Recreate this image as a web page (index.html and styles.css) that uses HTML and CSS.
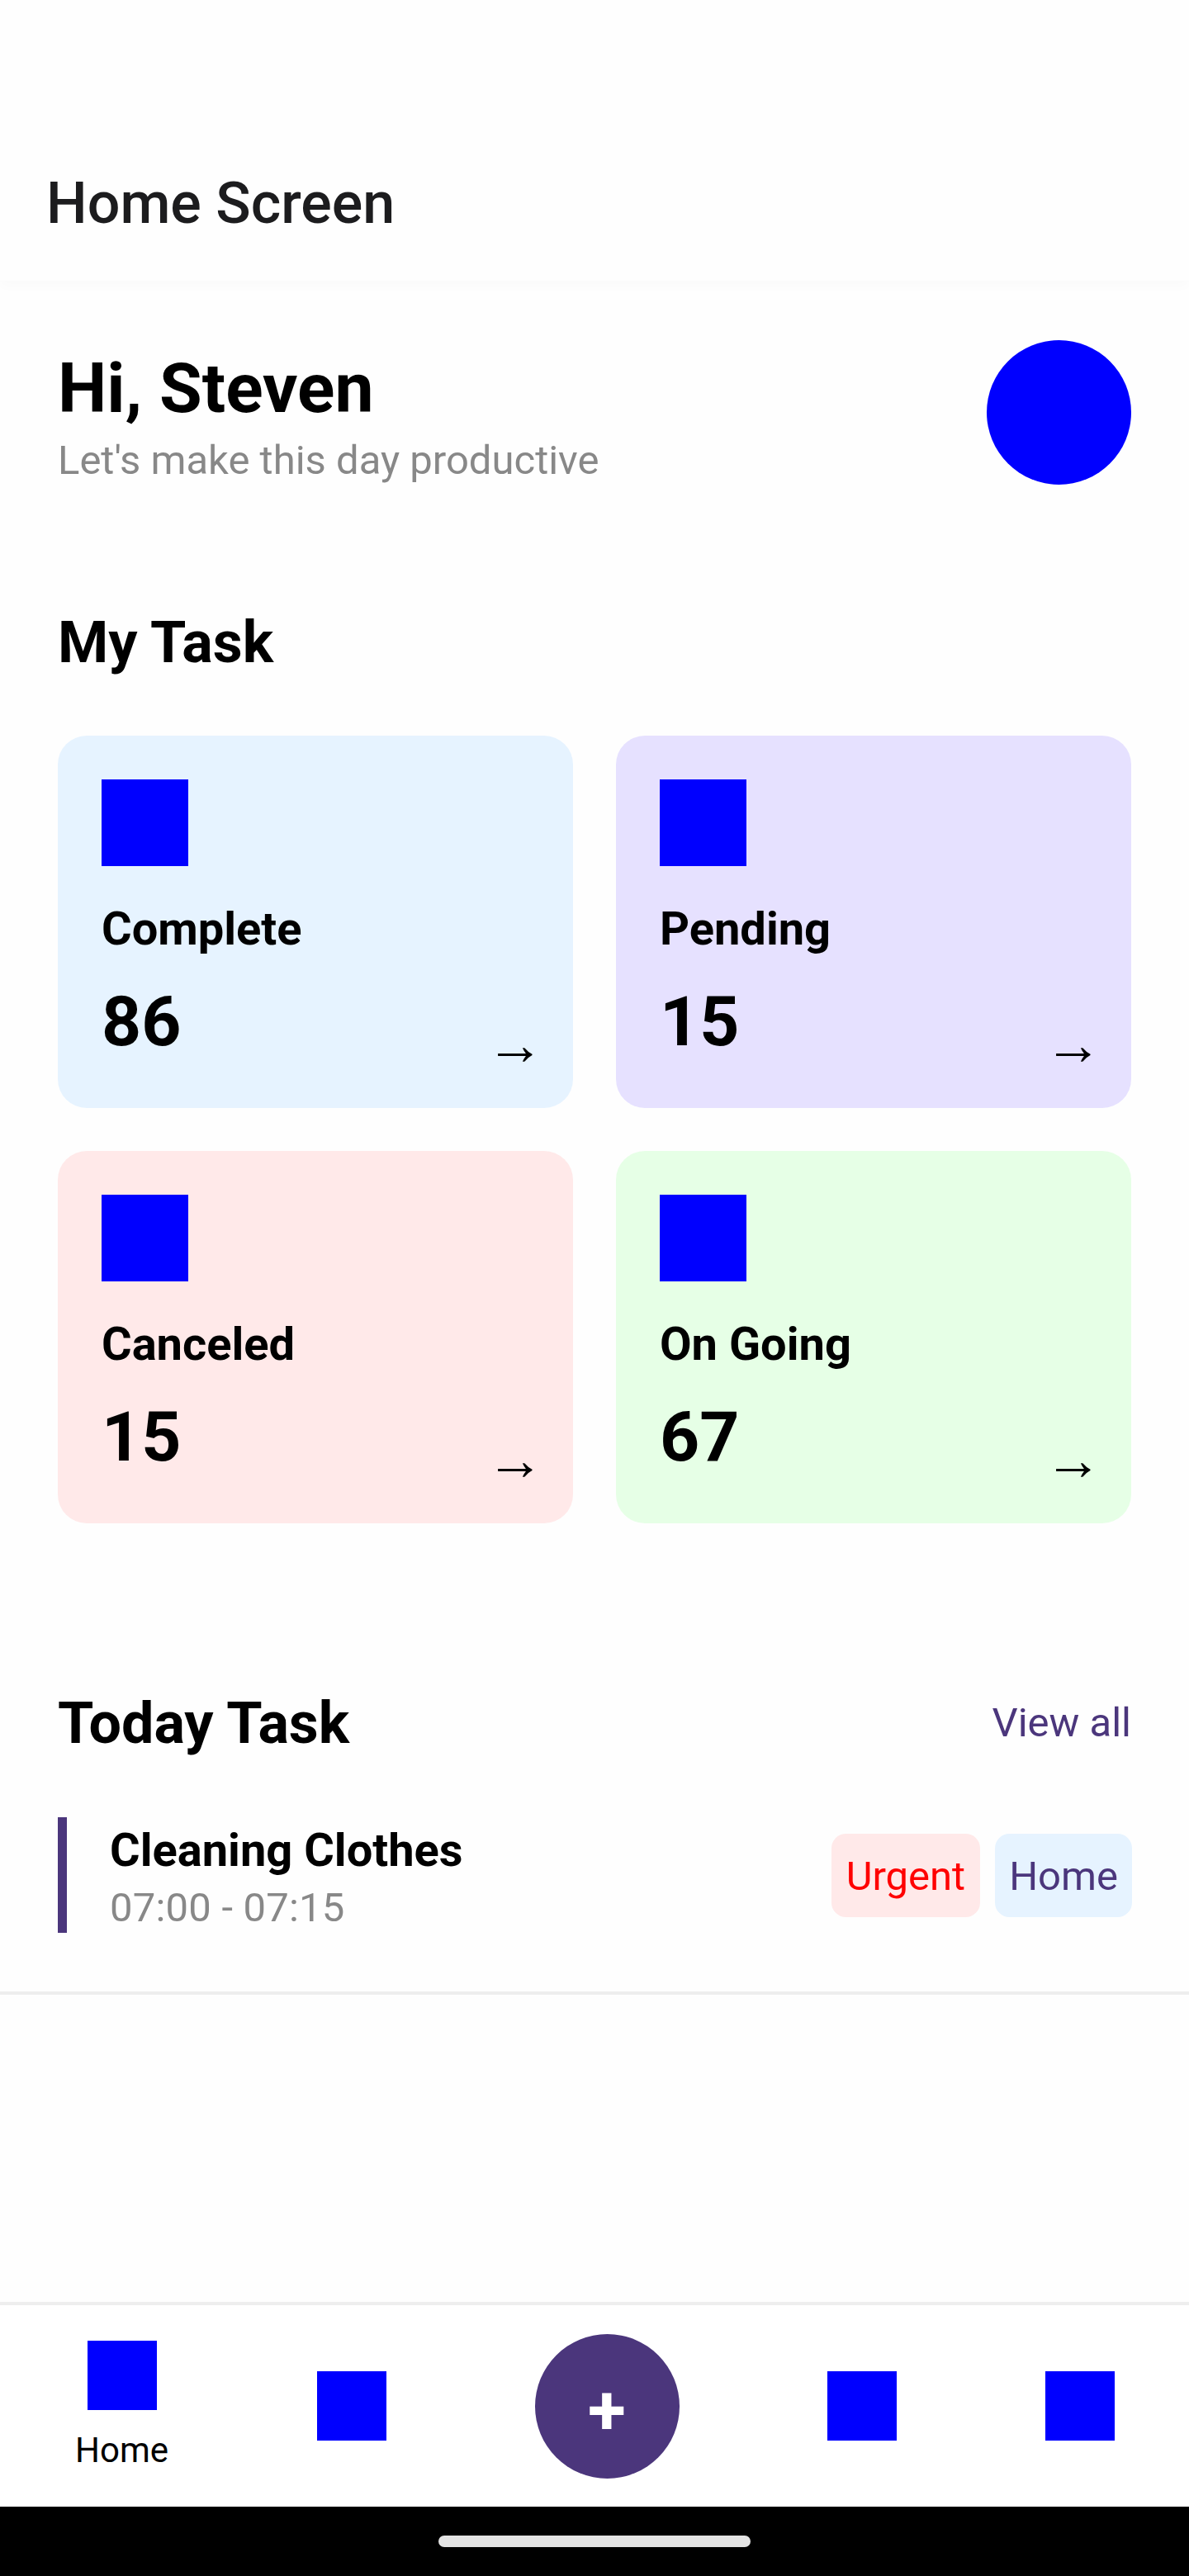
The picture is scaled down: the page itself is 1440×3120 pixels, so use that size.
FILE: index.html
```html
<!DOCTYPE html>
<html lang="en">
<head>
<meta charset="utf-8">
<title>Home Screen</title>
<link rel="stylesheet" href="styles.css">
</head>
<body>
<header class="appbar"><h1 class="appbar-title">Home Screen</h1></header>
<main class="content">
  <section class="greeting">
    <div>
      <h2 class="greeting-name">Hi, Steven</h2>
      <p class="greeting-sub">Let's make this day productive</p>
    </div>
    <div class="avatar"></div>
  </section>
  <h2 class="heading">My Task</h2>
  <section class="cards">
    <article class="card complete"><div class="card-icon"></div><h3 class="card-label">Complete</h3><p class="card-count">86</p><span class="arrow">→</span></article>
    <article class="card pending"><div class="card-icon"></div><h3 class="card-label">Pending</h3><p class="card-count">15</p><span class="arrow">→</span></article>
    <article class="card canceled"><div class="card-icon"></div><h3 class="card-label">Canceled</h3><p class="card-count">15</p><span class="arrow">→</span></article>
    <article class="card ongoing"><div class="card-icon"></div><h3 class="card-label">On Going</h3><p class="card-count">67</p><span class="arrow">→</span></article>
  </section>
  <div class="today-head">
    <h2 class="heading">Today Task</h2>
    <a class="view-all">View all</a>
  </div>
  <section class="task">
    <div class="task-bar"></div>
    <div class="task-info">
      <h3 class="task-title">Cleaning Clothes</h3>
      <p class="task-time">07:00 - 07:15</p>
    </div>
    <div class="tags">
      <span class="tag urgent">Urgent</span>
      <span class="tag home">Home</span>
    </div>
  </section>
</main>
<nav class="tabbar">
  <div class="tab"><div class="tab-icon"></div><span class="tab-label">Home</span></div>
  <div class="tab-icon"></div>
  <div class="fab">+</div>
  <div class="tab-icon"></div>
  <div class="tab-icon"></div>
</nav>
<footer class="system-bar"><div class="handle"></div></footer>
</body>
</html>
```
FILE: styles.css
```css
* { box-sizing: border-box; margin: 0; padding: 0; }

body {
  width: 1440px;
  height: 3120px;
  display: flex;
  flex-direction: column;
  background: #fefefe;
  color: #000;
  font-family: Roboto, "Liberation Sans", sans-serif;
  overflow: hidden;
}

.appbar {
  height: 340px;
  padding: 205px 56px 0;
  background: #fefefe;
  box-shadow: 0 4px 16px rgba(0, 0, 0, 0.022);
}
.appbar-title { font-size: 70px; line-height: 82px; font-weight: 500; color: #1c1c1e; }

.content { flex: 1; display: flex; flex-direction: column; }

.greeting {
  display: flex;
  justify-content: space-between;
  padding: 72px 70px 0;
  height: 247px;
}
.greeting-name { margin-top: 9px; font-size: 84px; line-height: 100px; font-weight: 700; }
.greeting-sub { font-size: 49px; line-height: 58px; margin-top: 8px; color: #888; white-space: nowrap; }
.avatar { width: 175px; height: 175px; border-radius: 50%; background: #00f; }

.heading { font-size: 70px; line-height: 82px; font-weight: 700; }
.content > .heading { margin: 150px 70px 0; }

.cards {
  display: grid;
  grid-template-columns: 624px 624px;
  grid-auto-rows: 451px;
  gap: 52px;
  margin: 72px 70px 0;
}
.card { position: relative; padding: 53px; border-radius: 35px; }
.complete { background: #e6f3ff; }
.pending { background: #e6e1ff; }
.canceled { background: #ffe9e9; }
.ongoing { background: #e6ffe6; }
.card-icon { width: 105px; height: 105px; background: #00f; }
.card-label { margin-top: 43px; font-size: 56px; line-height: 66px; font-weight: 700; }
.card-count { margin-top: 30px; font-size: 84px; line-height: 100px; font-weight: 700; }
.arrow {
  position: absolute;
  right: 35px;
  bottom: 36px;
  font-family: "Liberation Sans", sans-serif;
  font-size: 70px;
  line-height: 82px;
}

.today-head {
  display: flex;
  justify-content: space-between;
  align-items: center;
  margin: 201px 70px 0;
}
.view-all { font-size: 49px; line-height: 58px; color: #4b367c; }

.task {
  display: flex;
  align-items: center;
  height: 215px;
  margin-top: 73px;
  padding: 0 69px 71px 70px;
  border-bottom: 4px solid #eee;
}
.task-bar { width: 11px; height: 140px; background: #4b367c; }
.task-info { flex: 1; padding: 6px 0 0 52px; }
.task-title { font-size: 56px; line-height: 66px; font-weight: 700; }
.task-time { font-size: 49px; line-height: 58px; margin-top: 8px; letter-spacing: 0.2px; color: #888; }
.tags { display: flex; gap: 18px; }
.tag { height: 101px; padding: 23px 17px 0; border-radius: 17.5px; font-size: 49px; line-height: 58px; }
.urgent { padding-left: 18px; padding-right: 18px; background: #ffe9e9; color: #f00; }
.home { background: #e6f3ff; color: #4b367c; }

.tabbar {
  display: flex;
  align-items: center;
  justify-content: space-between;
  height: 248px;
  padding: 0 90px 0 91px;
  border-top: 4px solid #eee;
  background: #fff;
}
.tab { display: flex; flex-direction: column; align-items: center; margin-bottom: 1px; }
.tab-icon { width: 84px; height: 84px; background: #00f; }
.tab-label { margin-top: 24px; font-size: 42px; line-height: 49px; }
.fab {
  width: 175px;
  height: 175px;
  padding-top: 5px;
  border-radius: 50%;
  background: #4b367c;
  color: #fff;
  font-size: 84px;
  line-height: 175px;
  font-weight: 700;
  text-align: center;
}

.system-bar { display: flex; justify-content: center; height: 84px; padding-top: 35px; background: #000; }
.handle { width: 378px; height: 14px; border-radius: 7px; background: #e3e3e3; }
```
